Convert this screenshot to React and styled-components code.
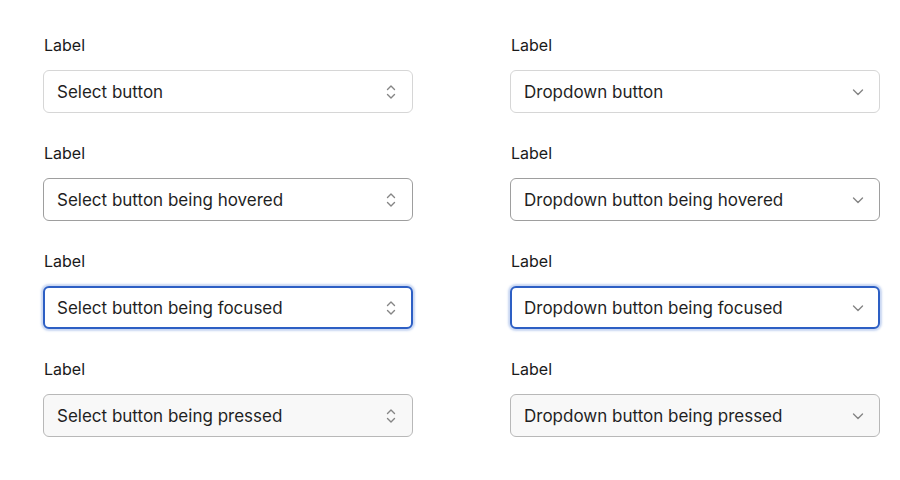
import { Fragment } from "react"
import styled, { createGlobalStyle, css } from "styled-components"

const GlobalStyle = createGlobalStyle`
  body {
    margin: 0;
    background: #fff;
    font-family: Inter, "Noto Sans", sans-serif;
    color: #1f1f1f;
  }
`

const Page = styled.div`
  display: grid;
  grid-template-columns: 370px 370px;
  column-gap: 97px;
  row-gap: 30px;
  padding: 35px 0 0 43px;
`

const Field = styled.div`
  display: flex;
  flex-direction: column;
  gap: 15px;
`

const Label = styled.label`
  font-size: 16px;
  font-weight: 400;
  line-height: 20px;
  color: #1a1a1a;
  padding-left: 1px;
`

const states = {
  default: css`
    border: 1px solid #d6d6d6;
    background: #fff;
  `,
  hovered: css`
    border: 1px solid #9e9e9e;
    background: #fff;
  `,
  focused: css`
    border: 2px solid #2d5fc4;
    padding: 0 13px 0 12px;
    background: #fff;
    box-shadow: 0 0 2px 2px rgba(60, 110, 210, 0.28);
  `,
  pressed: css`
    border: 1px solid #b8b8b8;
    background: #f8f8f8;
  `,
}

const Trigger = styled.button`
  display: flex;
  align-items: center;
  justify-content: space-between;
  height: 43px;
  box-sizing: border-box;
  padding: 0 14px 0 13px;
  border-radius: 6px;
  font-family: inherit;
  font-size: 17px;
  color: #1f1f1f;
  text-align: left;
  cursor: pointer;
  ${(p) => states[p.$state]}
`

const Icon = styled.svg`
  width: 14px;
  height: 20px;
  color: #858585;
  flex-shrink: 0;
`

function UpDown() {
  return (
    <Icon viewBox="0 0 14 20" fill="none" stroke="currentColor" strokeWidth="1.4" strokeLinecap="round" strokeLinejoin="round">
      <path d="M3.5 7.5 7 4l3.5 3.5" />
      <path d="M3.5 12.5 7 16l3.5-3.5" />
    </Icon>
  )
}

function Chevron() {
  return (
    <Icon viewBox="0 0 14 20" fill="none" stroke="currentColor" strokeWidth="1.4" strokeLinecap="round" strokeLinejoin="round">
      <path d="M2.5 8 7 12.5 11.5 8" />
    </Icon>
  )
}

const rows = [
  ["default", ""],
  ["hovered", " being hovered"],
  ["focused", " being focused"],
  ["pressed", " being pressed"],
]

export default function App() {
  return (
    <>
      <GlobalStyle />
      <Page>
        {rows.map(([state, suffix]) => (
          <Fragment key={state}>
            <Field>
              <Label>Label</Label>
              <Trigger $state={state}>
                <span>Select button{suffix}</span>
                <UpDown />
              </Trigger>
            </Field>
            <Field>
              <Label>Label</Label>
              <Trigger $state={state}>
                <span>Dropdown button{suffix}</span>
                <Chevron />
              </Trigger>
            </Field>
          </Fragment>
        ))}
      </Page>
    </>
  )
}
